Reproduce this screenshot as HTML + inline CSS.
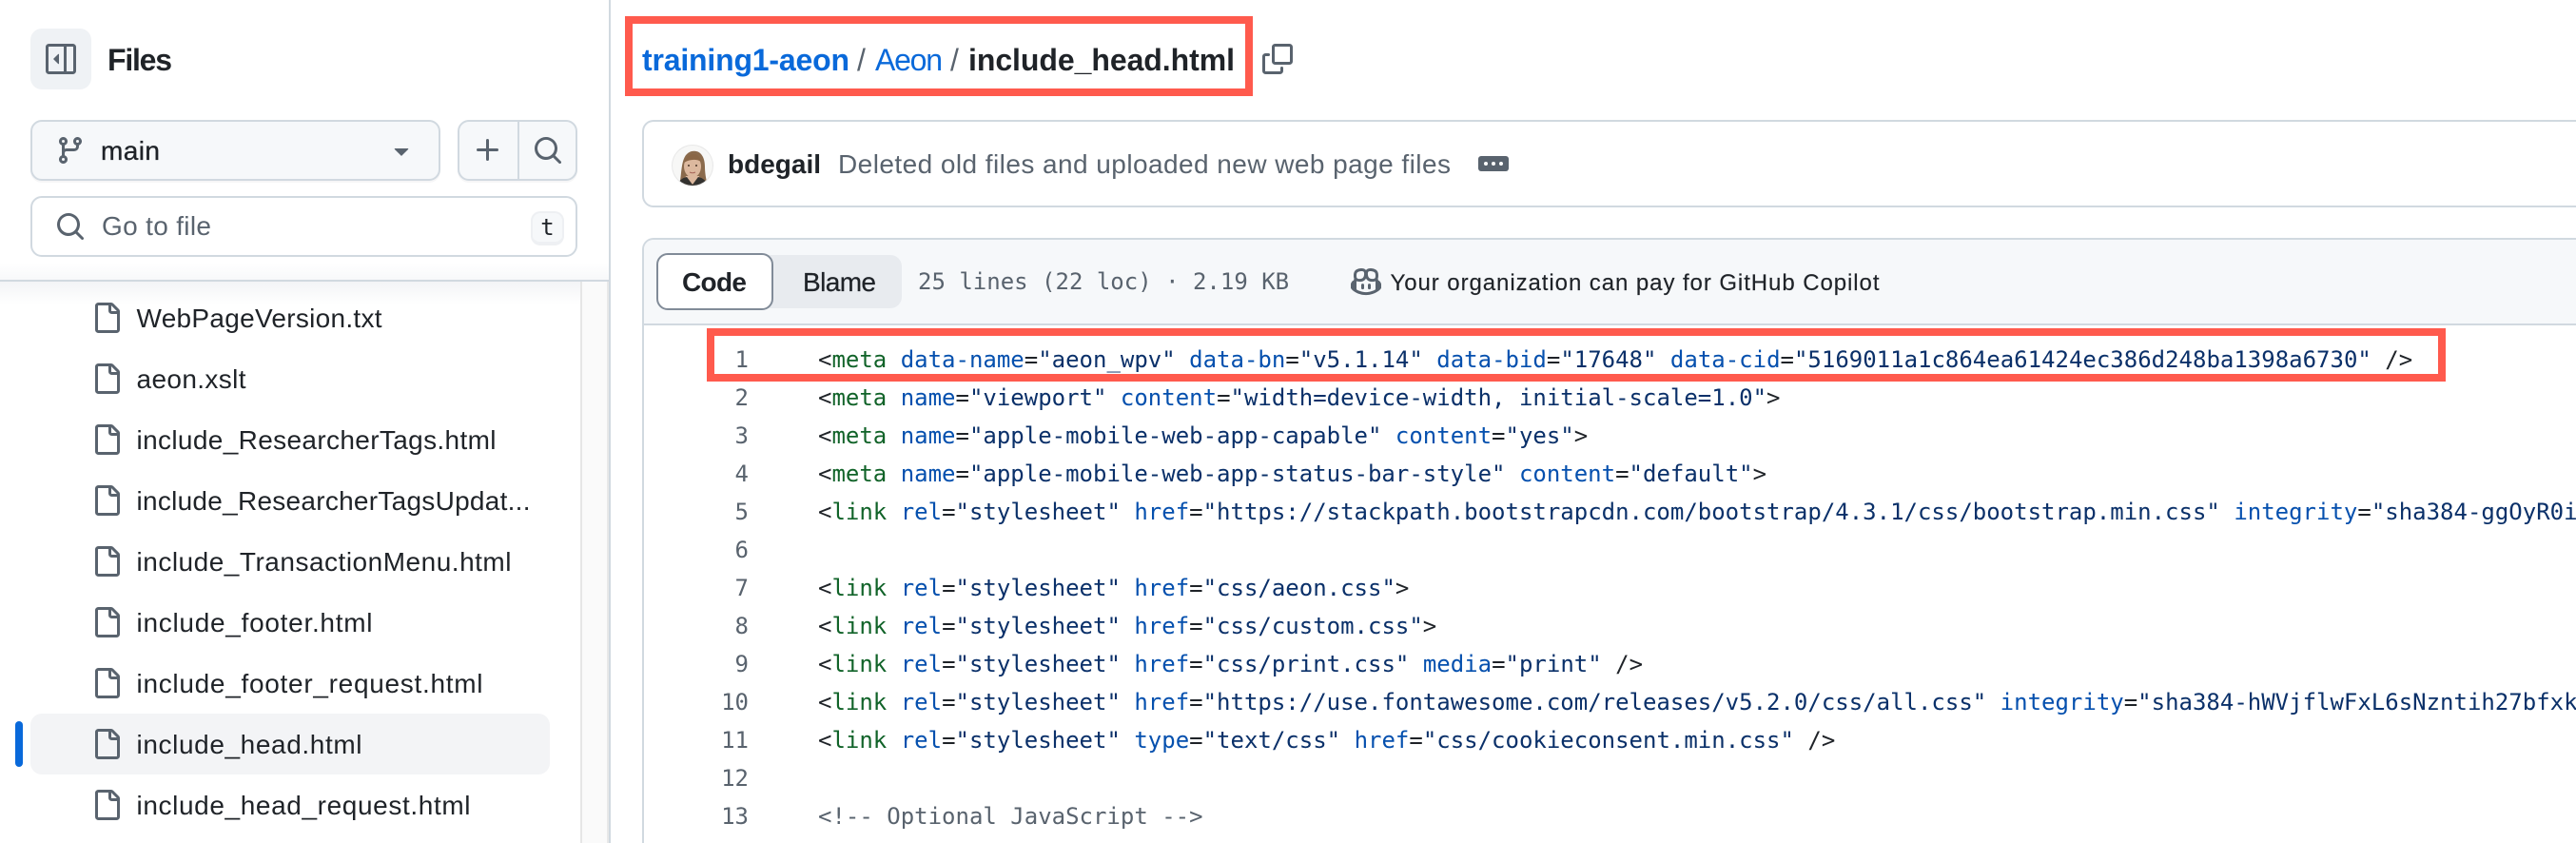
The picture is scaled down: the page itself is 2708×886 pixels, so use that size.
<!DOCTYPE html>
<html lang="en"><head><meta charset="utf-8"><title>include_head.html</title>
<style>
*{box-sizing:border-box}
html,body{margin:0;padding:0;width:2708px;height:886px;overflow:hidden;background:#fff}
body{position:relative;font-family:"Liberation Sans",sans-serif;color:#1f2328}
.b{position:absolute}
.ic{position:absolute;width:32px;height:32px;fill:#59636e}
.code{position:absolute;left:860px;top:358px;width:1848px;height:528px;overflow:hidden;font:24px/40px "DejaVu Sans Mono",monospace;color:#1f2328;white-space:pre;margin:0}
.nums{position:absolute;left:700px;top:358px;width:87px;height:528px;overflow:hidden;font:24px/40px "DejaVu Sans Mono",monospace;color:#59636e;text-align:right;white-space:pre;margin:0}
.t{color:#116329}.a{color:#0550ae}.s{color:#0a3069}.c{color:#59636e}
svg.txt{position:absolute;left:0;top:0;width:2708px;height:886px;font-family:"Liberation Sans",sans-serif;pointer-events:none}
.mono{position:absolute;font:24px/40px "DejaVu Sans Mono",monospace;white-space:pre}
</style></head><body>

<!-- sidebar -->
<div class="b" style="left:640px;top:0;width:2px;height:886px;background:#d1d9e0"></div>
<div class="b" style="left:32px;top:30px;width:64px;height:64px;border-radius:12px;background:#eff2f5"></div>
<svg class="ic" style="left:48px;top:46px" viewBox="0 0 16 16"><path d="m4.177 7.823 2.396-2.396A.25.25 0 0 1 7 5.604v4.792a.25.25 0 0 1-.427.177L4.177 8.177a.25.25 0 0 1 0-.354Z"/><path d="M0 1.75C0 .784.784 0 1.75 0h12.5C15.216 0 16 .784 16 1.75v12.5A1.75 1.75 0 0 1 14.25 16H1.75A1.75 1.75 0 0 1 0 14.25Zm1.75-.25a.25.25 0 0 0-.25.25v12.5c0 .138.112.25.25.25H9.5v-13Zm12.5 13a.25.25 0 0 0 .25-.25V1.75a.25.25 0 0 0-.25-.25H11v13Z"/></svg>

<div class="b" style="left:32px;top:126px;width:431px;height:64px;border-radius:12px;background:#f6f8fa;border:2px solid #d1d9e0;box-shadow:0 2px 0 rgba(31,35,40,.04)"></div>
<svg class="ic" style="left:58px;top:142px" viewBox="0 0 16 16"><path d="M9.5 3.25a2.25 2.25 0 1 1 3 2.122V6A2.5 2.5 0 0 1 10 8.5H6a1 1 0 0 0-1 1v1.128a2.251 2.251 0 1 1-1.5 0V5.372a2.25 2.25 0 1 1 1.5 0v1.836A2.493 2.493 0 0 1 6 7h4a1 1 0 0 0 1-1v-.628A2.25 2.25 0 0 1 9.5 3.25Zm-6 0a.75.75 0 1 0 1.5 0 .75.75 0 0 0-1.5 0Zm8.25-.75a.75.75 0 1 0 0 1.5.75.75 0 0 0 0-1.5ZM4.25 12a.75.75 0 1 0 0 1.5.75.75 0 0 0 0-1.5Z"/></svg>
<svg class="ic" style="left:406px;top:142px" viewBox="0 0 16 16"><path d="m4.427 7.427 3.396 3.396a.25.25 0 0 0 .354 0l3.396-3.396A.25.25 0 0 0 11.396 7H4.604a.25.25 0 0 0-.177.427Z"/></svg>

<div class="b" style="left:481px;top:126px;width:126px;height:64px;border-radius:12px;background:#f6f8fa;border:2px solid #d1d9e0;box-shadow:0 2px 0 rgba(31,35,40,.04)"></div>
<div class="b" style="left:544px;top:127px;width:2px;height:62px;background:#d1d9e0"></div>
<svg class="ic" style="left:497px;top:142px" viewBox="0 0 16 16"><path d="M7.75 2a.75.75 0 0 1 .75.75V7h4.25a.75.75 0 0 1 0 1.5H8.5v4.25a.75.75 0 0 1-1.5 0V8.5H2.75a.75.75 0 0 1 0-1.5H7V2.75A.75.75 0 0 1 7.75 2Z"/></svg>
<svg class="ic" style="left:560px;top:142px" viewBox="0 0 16 16"><path d="M10.68 11.74a6 6 0 0 1-7.922-8.982 6 6 0 0 1 8.982 7.922l3.04 3.04a.749.749 0 0 1-.326 1.275.749.749 0 0 1-.734-.215ZM11.5 7a4.499 4.499 0 1 0-8.997 0A4.499 4.499 0 0 0 11.5 7Z"/></svg>

<div class="b" style="left:32px;top:206px;width:575px;height:64px;border-radius:12px;background:#fff;border:2px solid #d1d9e0"></div>
<svg class="ic" style="left:58px;top:222px" viewBox="0 0 16 16"><path d="M10.68 11.74a6 6 0 0 1-7.922-8.982 6 6 0 0 1 8.982 7.922l3.04 3.04a.749.749 0 0 1-.326 1.275.749.749 0 0 1-.734-.215ZM11.5 7a4.499 4.499 0 1 0-8.997 0A4.499 4.499 0 0 0 11.5 7Z"/></svg>
<div class="b" style="left:558px;top:222px;width:35px;height:36px;border-radius:10px;background:#f6f8fa;border:2px solid #eef0f3;border-bottom-width:4px"></div>
<div class="b" style="left:558px;top:220px;width:35px;height:36px;text-align:center;font:24px/38px 'DejaVu Sans Mono',monospace;color:#1f2328">t</div>

<!-- tree top divider, shadow, scrollbar -->
<div class="b" style="left:0;top:276px;width:640px;height:18px;background:linear-gradient(to bottom,rgba(240,242,245,0),rgba(240,242,245,.5))"></div>
<div class="b" style="left:0;top:294px;width:640px;height:2px;background:#d1d9e0"></div>
<div class="b" style="left:612px;top:296px;width:26px;height:590px;background:#fafafa"></div>
<div class="b" style="left:610px;top:296px;width:2px;height:590px;background:#e6e6e6"></div>
<div class="b" style="left:638px;top:296px;width:2px;height:590px;background:#e8e8e8"></div>
<div class="b" style="left:0;top:296px;width:610px;height:24px;background:linear-gradient(to bottom,#f3f4f6,#fff)"></div>

<!-- selected row -->
<div class="b" style="left:32px;top:750px;width:546px;height:64px;border-radius:12px;background:#f3f4f6"></div>
<div class="b" style="left:16px;top:758px;width:8px;height:48px;border-radius:4px;background:#0969da"></div>

<!-- file icons -->
<svg style="position:absolute;left:0;top:0;width:0;height:0"><defs><path id="f" d="M2 1.75C2 .784 2.784 0 3.75 0h6.586c.464 0 .909.184 1.237.513l2.914 2.914c.329.328.513.773.513 1.237v9.586A1.75 1.75 0 0 1 13.25 16h-9.5A1.75 1.75 0 0 1 2 14.25Zm1.75-.25a.25.25 0 0 0-.25.25v12.5c0 .138.112.25.25.25h9.5a.25.25 0 0 0 .25-.25V6h-2.75A1.75 1.75 0 0 1 9 4.25V1.5Zm6.75.062V4.25c0 .138.112.25.25.25h2.688l-.011-.013-2.914-2.914-.013-.011Z"/></defs></svg>
<svg class="ic" style="left:96px;top:318px" viewBox="0 0 16 16"><use href="#f"/></svg>
<svg class="ic" style="left:96px;top:382px" viewBox="0 0 16 16"><use href="#f"/></svg>
<svg class="ic" style="left:96px;top:446px" viewBox="0 0 16 16"><use href="#f"/></svg>
<svg class="ic" style="left:96px;top:510px" viewBox="0 0 16 16"><use href="#f"/></svg>
<svg class="ic" style="left:96px;top:574px" viewBox="0 0 16 16"><use href="#f"/></svg>
<svg class="ic" style="left:96px;top:638px" viewBox="0 0 16 16"><use href="#f"/></svg>
<svg class="ic" style="left:96px;top:702px" viewBox="0 0 16 16"><use href="#f"/></svg>
<svg class="ic" style="left:96px;top:766px" viewBox="0 0 16 16"><use href="#f"/></svg>
<svg class="ic" style="left:96px;top:830px" viewBox="0 0 16 16"><use href="#f"/></svg>

<!-- main: commit box -->
<div class="b" style="left:675px;top:126px;width:2033px;height:92px;border:2px solid #d1d9e0;border-right:0;border-radius:12px 0 0 12px;background:#fff"></div>
<svg class="b" style="left:706px;top:152px;width:44px;height:44px" viewBox="0 0 44 44">
<defs><clipPath id="av"><circle cx="22" cy="22" r="21"/></clipPath></defs>
<circle cx="22" cy="22" r="22" fill="#e8e8e8"/>
<g clip-path="url(#av)">
<rect width="44" height="44" fill="#f7f7f6"/>
<path d="M9 38C11 26 10 10 21 7c10-2 14 7 14 16 0 6 1 12 2 16Z" fill="#8a6a4c"/>
<ellipse cx="22" cy="23" rx="9" ry="11.5" fill="#dcb89e"/>
<path d="M13 19c2-6 6-9 10-9 4 0 7 3 8 8-4-3-12-3-18 1Z" fill="#8a6646"/>
<path d="M15 33h14l3 11H12Z" fill="#dcb89e"/>
<path d="M6 44c1-6 5-9 10-10l6 8 6-8c5 1 9 4 10 10Z" fill="#33322f"/>
<circle cx="18" cy="22" r="1" fill="#4a3428"/><circle cx="26" cy="22" r="1" fill="#4a3428"/>
<path d="M19 29c2 1 4 1 6 0" stroke="#a8675a" stroke-width="1" fill="none"/>
</g></svg>
<div class="b" style="left:1554px;top:164px;width:32px;height:16px;border-radius:3px;background:#59636e"></div>
<div class="b" style="left:1560px;top:170px;width:4px;height:4px;border-radius:2px;background:#fff"></div>
<div class="b" style="left:1568px;top:170px;width:4px;height:4px;border-radius:2px;background:#fff"></div>
<div class="b" style="left:1576px;top:170px;width:4px;height:4px;border-radius:2px;background:#fff"></div>

<!-- copy icon -->
<svg class="ic" style="left:1327px;top:46px" viewBox="0 0 16 16"><path d="M0 6.75C0 5.784.784 5 1.75 5h1.5a.75.75 0 0 1 0 1.5h-1.5a.25.25 0 0 0-.25.25v7.5c0 .138.112.25.25.25h7.5a.25.25 0 0 0 .25-.25v-1.5a.75.75 0 0 1 1.5 0v1.5A1.75 1.75 0 0 1 9.25 16h-7.5A1.75 1.75 0 0 1 0 14.25Z"/><path d="M5 1.75C5 .784 5.784 0 6.75 0h7.5C15.216 0 16 .784 16 1.75v7.5A1.75 1.75 0 0 1 14.25 11h-7.5A1.75 1.75 0 0 1 5 9.25Zm1.75-.25a.25.25 0 0 0-.25.25v7.5c0 .138.112.25.25.25h7.5a.25.25 0 0 0 .25-.25v-7.5a.25.25 0 0 0-.25-.25Z"/></svg>

<!-- file box -->
<div class="b" style="left:675px;top:250px;width:2033px;height:636px;border:2px solid #d1d9e0;border-right:0;border-bottom:0;border-radius:12px 0 0 0;background:#fff"></div>
<div class="b" style="left:677px;top:252px;width:2031px;height:88px;background:#f6f8fa;border-radius:10px 0 0 0"></div>
<div class="b" style="left:677px;top:340px;width:2031px;height:2px;background:#d1d9e0"></div>
<div class="b" style="left:690px;top:268px;width:258px;height:56px;border-radius:12px;background:#e8ebef"></div>
<div class="b" style="left:690px;top:266px;width:123px;height:60px;border-radius:12px;background:#fff;border:2px solid #818b98"></div>
<div class="mono" style="left:965px;top:276px;color:#59636e">25 lines (22 loc) · 2.19 KB</div>
<svg class="ic" style="left:1420px;top:280px" viewBox="0 0 16 16"><path d="M7.998 15.035c-4.562 0-7.873-2.914-7.998-3.749V9.338c.085-.628.677-1.686 1.588-2.065.013-.07.024-.143.036-.218.029-.183.06-.384.126-.612-.201-.508-.254-1.084-.254-1.656 0-.87.128-1.769.693-2.484.579-.733 1.494-1.124 2.724-1.261 1.206-.134 2.262.034 2.944.765.05.053.096.108.139.165.044-.057.094-.112.143-.165.682-.731 1.738-.899 2.944-.765 1.23.137 2.145.528 2.724 1.261.566.715.693 1.614.693 2.484 0 .572-.053 1.148-.254 1.656.066.228.098.429.126.612.012.076.024.148.037.218.924.385 1.522 1.471 1.591 2.095v1.872c0 .766-3.351 3.795-8.002 3.795Zm0-1.485c2.28 0 4.584-1.11 5.002-1.433V7.862l-.023-.116c-.49.21-1.075.291-1.727.291-1.146 0-2.059-.327-2.71-.991A3.222 3.222 0 0 1 8 6.303a3.24 3.24 0 0 1-.544.743c-.65.664-1.563.991-2.71.991-.652 0-1.236-.081-1.727-.291l-.023.116v4.255c.419.323 2.722 1.433 5.002 1.433ZM6.762 2.83c-.193-.206-.637-.413-1.682-.297-1.019.113-1.479.404-1.713.7-.247.312-.369.789-.369 1.554 0 .793.129 1.171.308 1.371.162.181.519.379 1.442.379.853 0 1.339-.235 1.638-.54.315-.322.527-.827.617-1.553.117-.935-.037-1.395-.241-1.614Zm4.155-.297c-1.044-.116-1.488.091-1.681.297-.204.219-.359.679-.242 1.614.091.726.303 1.231.618 1.553.299.305.784.54 1.638.54.922 0 1.28-.198 1.442-.379.179-.2.308-.578.308-1.371 0-.765-.123-1.242-.37-1.554-.233-.296-.693-.587-1.713-.7Z"/><path d="M6.25 9.037a.75.75 0 0 1 .75.75v1.501a.75.75 0 0 1-1.5 0V9.787a.75.75 0 0 1 .75-.75Zm4.25.75v1.501a.75.75 0 0 1-1.5 0V9.787a.75.75 0 0 1 1.5 0Z"/></svg>

<!-- code -->
<pre class="nums">1
2
3
4
5
6
7
8
9
10
11
12
13</pre>
<pre class="code">&lt;<span class="t">meta</span> <span class="a">data-name</span>=<span class="s">"aeon_wpv"</span> <span class="a">data-bn</span>=<span class="s">"v5.1.14"</span> <span class="a">data-bid</span>=<span class="s">"17648"</span> <span class="a">data-cid</span>=<span class="s">"5169011a1c864ea61424ec386d248ba1398a6730"</span> /&gt;
&lt;<span class="t">meta</span> <span class="a">name</span>=<span class="s">"viewport"</span> <span class="a">content</span>=<span class="s">"width=device-width, initial-scale=1.0"</span>&gt;
&lt;<span class="t">meta</span> <span class="a">name</span>=<span class="s">"apple-mobile-web-app-capable"</span> <span class="a">content</span>=<span class="s">"yes"</span>&gt;
&lt;<span class="t">meta</span> <span class="a">name</span>=<span class="s">"apple-mobile-web-app-status-bar-style"</span> <span class="a">content</span>=<span class="s">"default"</span>&gt;
&lt;<span class="t">link</span> <span class="a">rel</span>=<span class="s">"stylesheet"</span> <span class="a">href</span>=<span class="s">"https://stackpath.bootstrapcdn.com/bootstrap/4.3.1/css/bootstrap.min.css"</span> <span class="a">integrity</span>=<span class="s">"sha384-ggOyR0iXCbMQv3Xipma34MD+dH/1fQ784/j6cY/iJTQUOhcWr7x9JvoRxT2MZw1T"</span>

&lt;<span class="t">link</span> <span class="a">rel</span>=<span class="s">"stylesheet"</span> <span class="a">href</span>=<span class="s">"css/aeon.css"</span>&gt;
&lt;<span class="t">link</span> <span class="a">rel</span>=<span class="s">"stylesheet"</span> <span class="a">href</span>=<span class="s">"css/custom.css"</span>&gt;
&lt;<span class="t">link</span> <span class="a">rel</span>=<span class="s">"stylesheet"</span> <span class="a">href</span>=<span class="s">"css/print.css"</span> <span class="a">media</span>=<span class="s">"print"</span> /&gt;
&lt;<span class="t">link</span> <span class="a">rel</span>=<span class="s">"stylesheet"</span> <span class="a">href</span>=<span class="s">"https://use.fontawesome.com/releases/v5.2.0/css/all.css"</span> <span class="a">integrity</span>=<span class="s">"sha384-hWVjflwFxL6sNzntih27bfxkr27PmbbK/iSvJ+a4+0owXq79v+lsFkW54bOGbiDQ"</span>
&lt;<span class="t">link</span> <span class="a">rel</span>=<span class="s">"stylesheet"</span> <span class="a">type</span>=<span class="s">"text/css"</span> <span class="a">href</span>=<span class="s">"css/cookieconsent.min.css"</span> /&gt;

<span class="c">&lt;!-- Optional JavaScript --&gt;</span></pre>

<!-- proportional text -->
<svg class="txt" viewBox="0 0 2708 886" font-size="28" fill="#1f2328">
<text x="113" y="74" font-size="32" font-weight="700" textLength="68" lengthAdjust="spacing">Files</text>
<text x="106" y="168" stroke="#1f2328" stroke-width=".35" textLength="62" lengthAdjust="spacing">main</text>
<text x="107" y="247" fill="#59636e" textLength="115" lengthAdjust="spacing">Go to file</text>
<text x="143.5" y="344" textLength="258" lengthAdjust="spacing">WebPageVersion.txt</text>
<text x="143.5" y="408" textLength="115" lengthAdjust="spacing">aeon.xslt</text>
<text x="143.5" y="472" textLength="378" lengthAdjust="spacing">include_ResearcherTags.html</text>
<text x="143.5" y="536" textLength="414" lengthAdjust="spacing">include_ResearcherTagsUpdat...</text>
<text x="143.5" y="600" textLength="394" lengthAdjust="spacing">include_TransactionMenu.html</text>
<text x="143.5" y="664" textLength="248" lengthAdjust="spacing">include_footer.html</text>
<text x="143.5" y="728" textLength="364" lengthAdjust="spacing">include_footer_request.html</text>
<text x="143.5" y="792" textLength="237" lengthAdjust="spacing">include_head.html</text>
<text x="143.5" y="856" textLength="351" lengthAdjust="spacing">include_head_request.html</text>

<text x="675" y="74" font-size="32" font-weight="700" fill="#0969da" textLength="218" lengthAdjust="spacing">training1-aeon</text>
<text x="901" y="74" font-size="32" fill="#59636e">/</text>
<text x="920" y="74" font-size="32" fill="#0969da" textLength="71" lengthAdjust="spacing">Aeon</text>
<text x="999" y="74" font-size="32" fill="#59636e">/</text>
<text x="1018" y="74" font-size="32" font-weight="700" textLength="280" lengthAdjust="spacing">include_head.html</text>

<text x="765" y="182" font-weight="700" textLength="98" lengthAdjust="spacing">bdegail</text>
<text x="881" y="182" fill="#59636e" textLength="644" lengthAdjust="spacing">Deleted old files and uploaded new web page files</text>
<text x="717" y="306" font-weight="700" textLength="68" lengthAdjust="spacing">Code</text>
<text x="844" y="306" stroke="#1f2328" stroke-width=".25" textLength="77" lengthAdjust="spacing">Blame</text>
<text x="1461.5" y="305" font-size="24" stroke="#1f2328" stroke-width=".15" textLength="514" lengthAdjust="spacing">Your organization can pay for GitHub Copilot</text>
</svg>

<!-- annotations -->
<div class="b" style="left:657px;top:17px;width:660px;height:84px;border:8px solid #ff5a4d"></div>
<div class="b" style="left:743px;top:345px;width:1828px;height:56px;border:8px solid #ff5a4d"></div>
</body></html>
